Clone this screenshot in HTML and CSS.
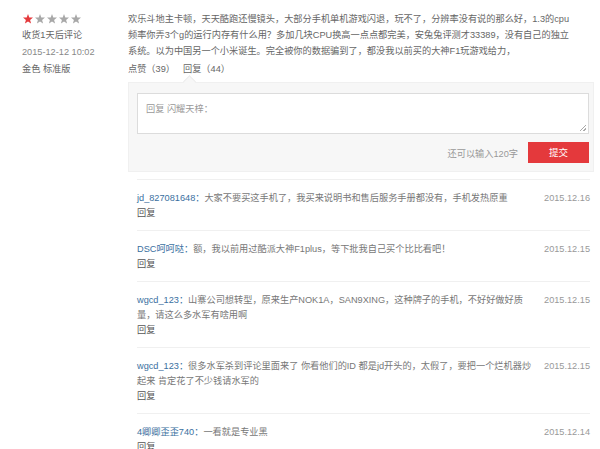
FILE: index.html
```html
<!DOCTYPE html>
<html lang="zh">
<head>
<meta charset="utf-8">
<link rel="stylesheet" href="styles.css">
</head>
<body>
<div class="review">
  <div class="meta">
    <div class="stars">
      <svg class="star on" viewBox="0 0 10 10"><polygon points="5,0 6.3,3.5 10,3.6 7.1,5.9 8.1,9.6 5,7.5 1.9,9.6 2.9,5.9 0,3.6 3.7,3.5"/></svg>
      <svg class="star" viewBox="0 0 10 10"><polygon points="5,0 6.3,3.5 10,3.6 7.1,5.9 8.1,9.6 5,7.5 1.9,9.6 2.9,5.9 0,3.6 3.7,3.5"/></svg>
      <svg class="star" viewBox="0 0 10 10"><polygon points="5,0 6.3,3.5 10,3.6 7.1,5.9 8.1,9.6 5,7.5 1.9,9.6 2.9,5.9 0,3.6 3.7,3.5"/></svg>
      <svg class="star" viewBox="0 0 10 10"><polygon points="5,0 6.3,3.5 10,3.6 7.1,5.9 8.1,9.6 5,7.5 1.9,9.6 2.9,5.9 0,3.6 3.7,3.5"/></svg>
      <svg class="star" viewBox="0 0 10 10"><polygon points="5,0 6.3,3.5 10,3.6 7.1,5.9 8.1,9.6 5,7.5 1.9,9.6 2.9,5.9 0,3.6 3.7,3.5"/></svg>
    </div>
    <div class="meta-line">收货1天后评论</div>
    <div class="meta-line date">2015-12-12 10:02</div>
    <div class="meta-line">金色 标准版</div>
  </div>
  <div class="main">
    <p class="content">欢乐斗地主卡顿，天天酷跑还慢镜头，大部分手机单机游戏闪退，玩不了，分辨率没有说的那么好，1.3的cpu频率你弄3个g的运行内存有什么用？多加几块CPU换高一点点都完美，安兔兔评测才33389，没有自己的独立系统。以为中国另一个小米诞生。完全被你的数据骗到了，都没我以前买的大神F1玩游戏给力，</p>
    <div class="actions"><span class="act">点赞（39）</span><span class="act">回复（44）</span></div>
    <div class="reply-box">
      <div class="textarea">回复 闪耀天梓：<span class="grip"></span></div>
      <div class="submit-row"><span class="remain">还可以输入120字</span><span class="btn">提交</span></div>
    </div>
    <ul class="replies">
      <li class="reply">
        <div class="r-body"><p class="r-text"><span class="user">jd_827081648：</span>大家不要买这手机了，我买来说明书和售后服务手册都没有，手机发热原重</p><div class="r-act">回复</div></div>
        <div class="r-date">2015.12.16</div>
      </li>
      <li class="reply">
        <div class="r-body"><p class="r-text"><span class="user">DSC呵呵哒：</span>额，我以前用过酷派大神F1plus，等下批我自己买个比比看吧！</p><div class="r-act">回复</div></div>
        <div class="r-date">2015.12.15</div>
      </li>
      <li class="reply">
        <div class="r-body"><p class="r-text"><span class="user">wgcd_123：</span>山寨公司想转型，原来生产NOK1A，SAN9XING，这种牌子的手机，不好好做好质量，请这么多水军有啥用啊</p><div class="r-act">回复</div></div>
        <div class="r-date">2015.12.15</div>
      </li>
      <li class="reply">
        <div class="r-body"><p class="r-text"><span class="user">wgcd_123：</span>很多水军杀到评论里面来了 你看他们的ID 都是jd开头的，太假了，要把一个烂机器炒起来 肯定花了不少钱请水军的</p><div class="r-act">回复</div></div>
        <div class="r-date">2015.12.15</div>
      </li>
      <li class="reply">
        <div class="r-body"><p class="r-text"><span class="user">4卿卿歪歪740：</span>一看就是专业黑</p><div class="r-act">回复</div></div>
        <div class="r-date">2015.12.14</div>
      </li>
    </ul>
  </div>
</div>
</body>
</html>
```
FILE: styles.css
```css
* { box-sizing: border-box; }
html, body { margin: 0; padding: 0; background: #fff; }
body {
  font-family: "Liberation Sans", Arial, "Noto Sans CJK SC", sans-serif;
  font-size: 9.2px;
  color: #666;
  overflow: hidden;
}
.review {
  display: flex;
  padding: 11px 0 0 22px;
}
.meta {
  width: 106px;
  flex: none;
  line-height: 17px;
}
.stars {
  display: flex;
  gap: 2px;
  height: 16px;
  align-items: center;
  padding-left: 1px;
}
.star { width: 10px; height: 10px; fill: #a8a8a8; }
.star.on { fill: #e4393c; }
.meta-line { color: #666; }
.meta-line.date { color: #888; }
.main {
  width: 466px;
  flex: none;
}
.content {
  margin: 0;
  line-height: 16px;
  width: 446px;
  color: #666;
}
.actions {
  margin-top: 2px;
  line-height: 16px;
  display: flex;
  gap: 8px;
  color: #666;
}
.reply-box {
  position: relative;
  margin-top: 5px;
  background: #f7f7f7;
  border: 1px solid #f0f0f0;
  padding: 10px 4px 8px 8px;
}
.reply-box::before {
  content: "";
  position: absolute;
  top: -6px;
  left: 56px;
  width: 8px;
  height: 8px;
  background: #f7f7f7;
  border-left: 1px solid #ececec;
  border-top: 1px solid #ececec;
  transform: rotate(45deg);
}
.textarea {
  position: relative;
  height: 41px;
  background: #fff;
  border: 1px solid #dcdcdc;
  padding: 7px 8px;
  color: #999;
  line-height: 16px;
}
.grip {
  position: absolute;
  right: 2px;
  bottom: 2px;
  width: 6px;
  height: 6px;
  background: linear-gradient(135deg, transparent 45%, #aaa 45%, #aaa 55%, transparent 55%, transparent 75%, #aaa 75%, #aaa 85%, transparent 85%);
}
.submit-row {
  display: flex;
  justify-content: flex-end;
  align-items: center;
  margin-top: 8px;
  gap: 10px;
}
.remain { color: #999; }
.btn {
  width: 61px;
  height: 21px;
  line-height: 21px;
  text-align: center;
  background: #e4393c;
  color: #fff;
  font-size: 9.5px;
}
.replies {
  list-style: none;
  margin: 7px 0 0 9px;
  padding: 0;
  border-top: 1px solid #f0f0f0;
  width: 453px;
}
.reply {
  display: flex;
  border-bottom: 1px solid #f0f0f0;
  padding: 11px 0 9px;
  line-height: 15px;
}
.r-body { flex: 1; }
.r-text { margin: 0; width: 398px; color: #777; }
.user { color: #3a6fa0; }
.r-act { color: #555; }
.r-date {
  width: 50px;
  flex: none;
  text-align: right;
  color: #999;
}
```
